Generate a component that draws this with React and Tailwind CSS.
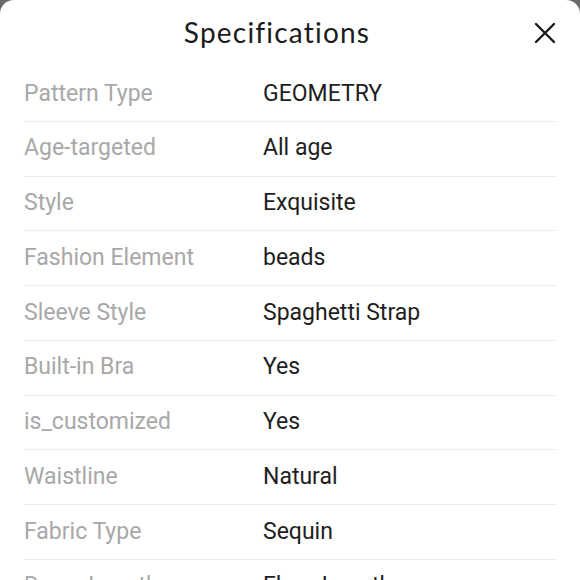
import React from "react";

const rows = [
  ["Pattern Type", "GEOMETRY"],
  ["Age-targeted", "All age"],
  ["Style", "Exquisite"],
  ["Fashion Element", "beads"],
  ["Sleeve Style", "Spaghetti Strap"],
  ["Built-in Bra", "Yes"],
  ["is_customized", "Yes"],
  ["Waistline", "Natural"],
  ["Fabric Type", "Sequin"],
  ["Dress Length", "Floor-Length"],
];

export default function App() {
  return (
    <div className="w-[580px] h-[580px] overflow-hidden bg-[#6b6b6b]">
      <div className="bg-white rounded-t-[14px] h-full">
        <div className="relative h-[67px] flex items-center justify-center pr-[26px] pb-[3px]">
          <span
            className="text-[28px] text-[#1c1c1c] tracking-[1.2px]"
            style={{ fontFamily: "Lato, 'Noto Sans', sans-serif" }}
          >
            Specifications
          </span>
          <svg
            className="absolute right-[24px] top-[22px]"
            width="22"
            height="22"
            viewBox="0 0 22 22"
            fill="none"
            stroke="#1a1a1a"
            strokeWidth="2.4"
            strokeLinecap="round"
          >
            <path d="M2 2 L20 20 M20 2 L2 20" />
          </svg>
        </div>
        <div className="px-[24px]" style={{ fontFamily: "Roboto, sans-serif" }}>
          {rows.map(([k, v], i) => (
            <div
              key={i}
              className="flex items-center h-[54.75px] border-b border-[#ececec] text-[23px]"
            >
              <span className="w-[239px] text-[#a8a8a8]">{k}</span>
              <span className="text-[#1e1e1e]">{v}</span>
            </div>
          ))}
        </div>
      </div>
    </div>
  );
}
